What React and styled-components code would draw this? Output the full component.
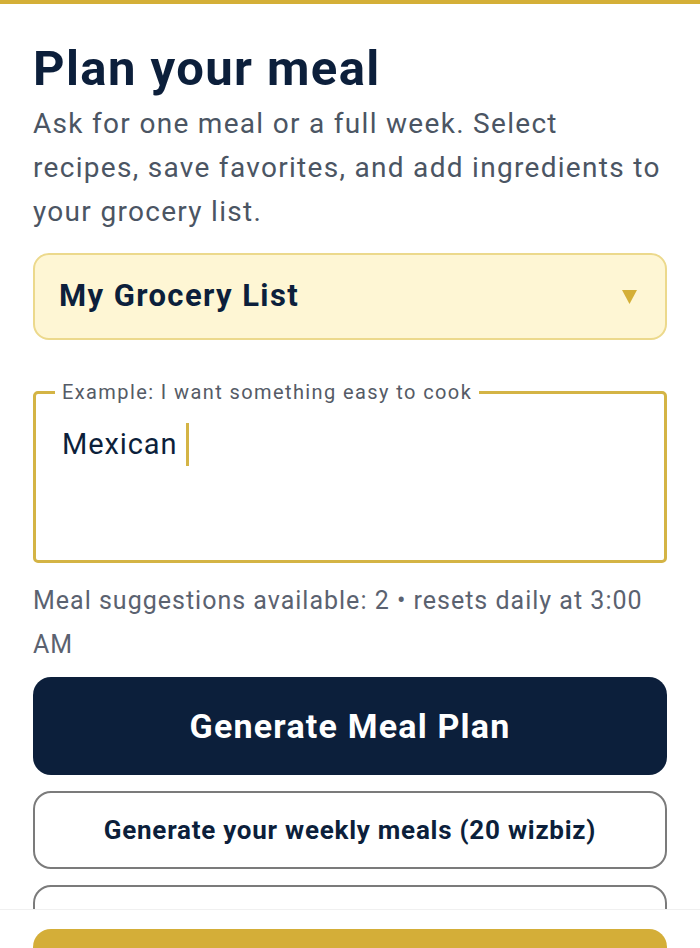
import React from "react";
import styled, { createGlobalStyle } from "styled-components";

const Global = createGlobalStyle`
  html, body { margin: 0; padding: 0; background: #ffffff; }
  body { font-family: Roboto, "Noto Sans", "Liberation Sans", sans-serif; color: #0c1f3b; }
  * { box-sizing: border-box; }
`;

const Page = styled.div`
  height: 948px;
  overflow: hidden;
  border-top: 4px solid #d4af37;
  padding: 38px 33px 0 33px;
  display: flex;
  flex-direction: column;
`;

const Title = styled.h1`
  margin: 0;
  font-size: 49px;
  line-height: 53px;
  font-weight: 700;
  color: #0c1f3b;
  letter-spacing: 1.4px;
`;

const Subtitle = styled.p`
  margin: 7px 0 0 0;
  font-size: 28px;
  line-height: 44px;
  color: #4b5563;
  letter-spacing: 1.3px;
`;

const Select = styled.div`
  margin-top: 19px;
  height: 87px;
  border-radius: 16px;
  background: #fef6d4;
  border: 2px solid #ecd98c;
  display: flex;
  align-items: center;
  justify-content: space-between;
  padding: 0 28px 0 24px;
  flex-shrink: 0;
`;

const SelectLabel = styled.span`
  font-size: 31px;
  font-weight: 700;
  color: #0c1f3b;
  letter-spacing: 1.4px;
  margin-top: -2px;
`;

const Caret = styled.svg`
  width: 15px;
  height: 14px;
  display: block;
`;

const Field = styled.fieldset`
  margin: 41px 0 0 0;
  padding: 0 24px 0 19px;
  border: 3px solid #d4b445;
  border-radius: 5px;
  height: 182px;
  flex-shrink: 0;
`;

const Legend = styled.legend`
  padding: 0 7px;
  font-size: 20px;
  line-height: 22px;
  color: #555b66;
  letter-spacing: 1.4px;
`;

const InputText = styled.div`
  margin-top: 19px;
  padding-left: 7px;
  font-size: 29px;
  line-height: 44px;
  color: #0c1f3b;
  letter-spacing: 0.9px;
  display: flex;
  align-items: center;
  white-space: pre;
`;

const TextCaret = styled.span`
  display: inline-block;
  width: 3px;
  height: 43px;
  background: #d4b445;
`;

const Hint = styled.p`
  margin: 16px 0 0 0;
  font-size: 25px;
  line-height: 44px;
  color: #5b6270;
  letter-spacing: 1px;
`;

const Button = styled.button`
  width: 100%;
  font-family: Roboto, "Noto Sans", "Liberation Sans", sans-serif;
  font-weight: 700;
  border-radius: 18px;
  cursor: pointer;
  display: flex;
  align-items: center;
  justify-content: center;
  margin: 0;
  padding: 0;
  height: ${(p) => p.$h}px;
  margin-top: ${(p) => p.$mt}px;
  font-size: ${(p) => p.$fs}px;
  letter-spacing: ${(p) => p.$ls}px;
  background: ${(p) => (p.$primary ? "#0c1f3b" : "#ffffff")};
  color: ${(p) => (p.$primary ? "#ffffff" : "#0c1f3b")};
  border: ${(p) => (p.$primary ? "none" : "2px solid #7b7b7b")};
  flex-shrink: 0;
`;

const BottomBar = styled.div`
  position: fixed;
  left: 0;
  right: 0;
  bottom: 0;
  height: 39px;
  background: #ffffff;
  border-top: 1px solid #f0f0f0;
  padding: 19px 33px 0 33px;
  overflow: hidden;
`;

const GoldButton = styled.div`
  height: 70px;
  border-radius: 18px;
  background: #d4ae38;
`;

export default function App() {
  return (
    <>
      <Global />
      <Page>
        <Title>Plan your meal</Title>
        <Subtitle>
          Ask for one meal or a full week. Select recipes, save favorites, and add ingredients to your grocery list.
        </Subtitle>
        <Select>
          <SelectLabel>My Grocery List</SelectLabel>
          <Caret viewBox="0 0 15 14">
            <polygon points="0,0 15,0 7.5,14" fill="#d4af37" />
          </Caret>
        </Select>
        <Field>
          <Legend>Example: I want something easy to cook</Legend>
          <InputText>
            {"Mexican "}
            <TextCaret />
          </InputText>
        </Field>
        <Hint>Meal suggestions available: 2 • resets daily at 3:00 AM</Hint>
        <Button $primary $h={98} $mt={10} $fs={34} $ls={1.2}>Generate Meal Plan</Button>
        <Button $h={78} $mt={16} $fs={26} $ls={0.75}>Generate your weekly meals (20 wizbiz)</Button>
        <Button $h={78} $mt={16} $fs={26} $ls={0.75}>Save as favorite</Button>
      </Page>
      <BottomBar>
        <GoldButton />
      </BottomBar>
    </>
  );
}
